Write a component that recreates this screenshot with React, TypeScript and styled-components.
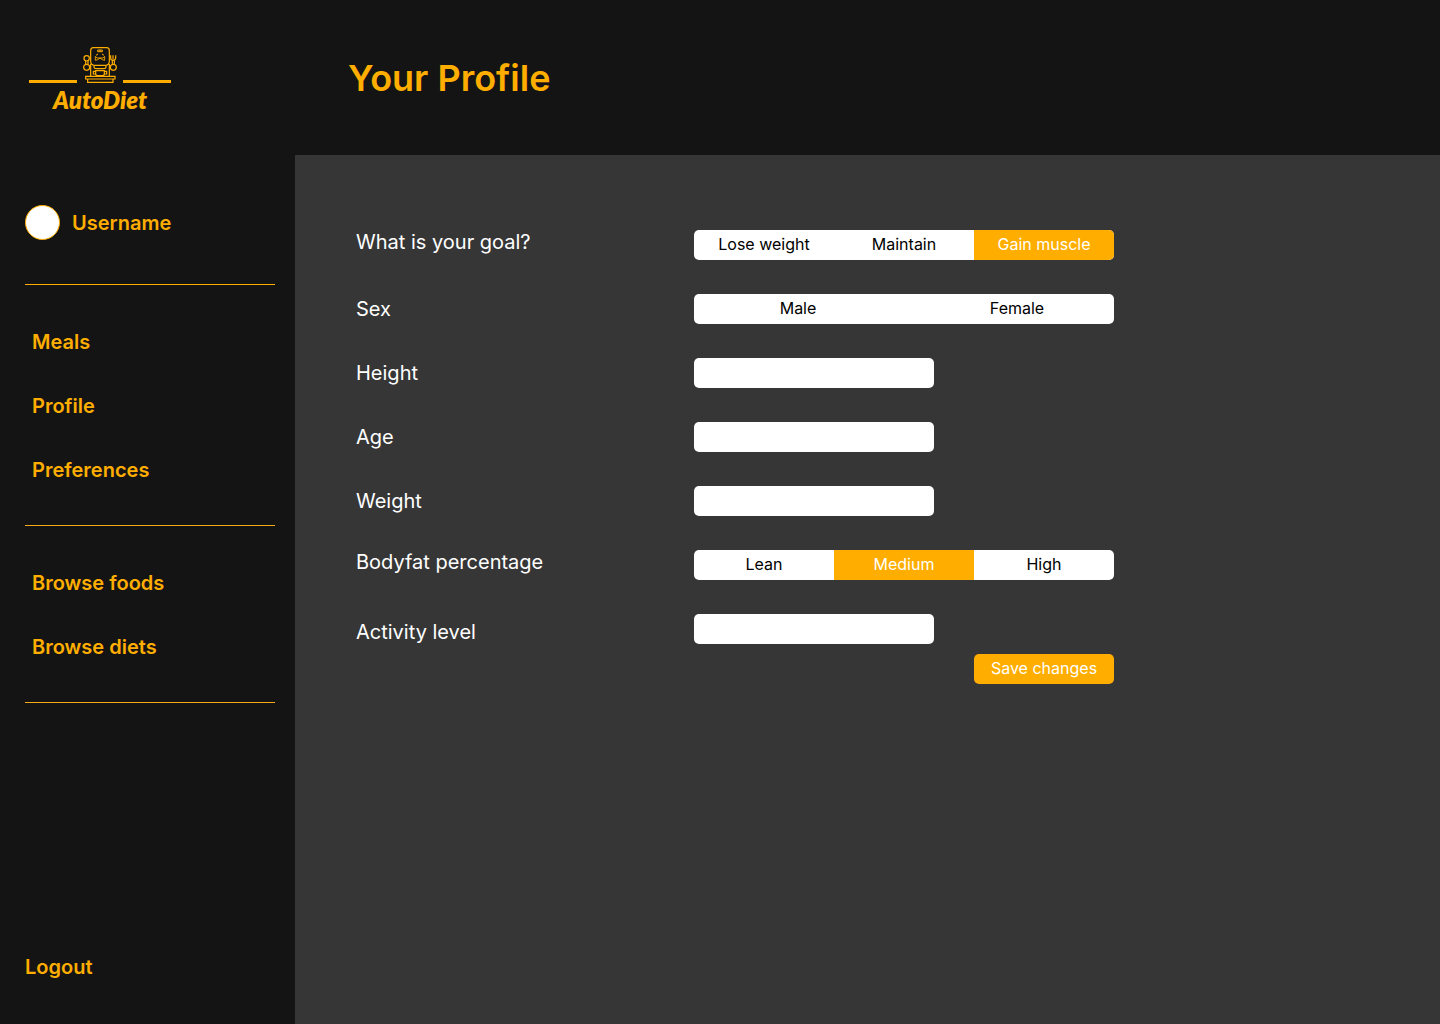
import React, { useState } from "react";
import styled, { createGlobalStyle } from "styled-components";

const colors = {
  accent: "#ffae00",
  dark: "#141414",
  panel: "#363636",
  rule: "#f3aa14",
};

const GlobalStyle = createGlobalStyle`
  *, *::before, *::after { box-sizing: border-box; }
  body {
    margin: 0;
    background: ${colors.dark};
    font-family: Inter, "Liberation Sans", sans-serif;
  }
`;

const Page = styled.div`
  display: grid;
  grid-template-columns: 295px 1fr;
  grid-template-rows: 155px 1fr;
  min-height: 100vh;
  background: ${colors.dark};
  color: ${colors.accent};
`;

const Brand = styled.a`
  justify-self: start;
  display: flex;
  flex-direction: column;
  align-items: center;
  width: 142px;
  margin: 47px 0 0 29px;
  color: inherit;
  text-decoration: none;
`;

const BrandMark = styled.span`
  display: flex;
  align-items: flex-end;
  gap: 6px;
`;

const BrandLine = styled.span`
  width: 48px;
  height: 3px;
  background: ${colors.accent};
`;

const BrandName = styled.span`
  font: italic 800 24px/34px Lato, sans-serif;
`;

const Header = styled.header`
  display: flex;
  align-items: center;
  padding: 0 53px;
`;

const Title = styled.h1`
  margin: 0;
  font-size: 36px;
  line-height: 44px;
  font-weight: 600;
`;

const Sidebar = styled.aside`
  display: flex;
  flex-direction: column;
  padding: 50px 20px 45px 25px;
`;

const User = styled.div`
  display: flex;
  align-items: center;
  gap: 12px;
  font-size: 20px;
  line-height: 24px;
  font-weight: 600;
  padding-bottom: 44px;
  border-bottom: 1px solid ${colors.accent};
`;

const Avatar = styled.span`
  width: 35px;
  height: 35px;
  border: 1px solid ${colors.accent};
  border-radius: 50%;
  background: #fff;
`;

const NavGroup = styled.nav`
  display: flex;
  flex-direction: column;
  align-items: flex-start;
  gap: 40px;
  padding: 45px 7px 43px;
  border-bottom: 1px solid ${colors.rule};
`;

const NavLink = styled.a`
  color: ${colors.accent};
  font-size: 20px;
  line-height: 24px;
  font-weight: 600;
  text-decoration: none;
`;

const Logout = styled.button`
  align-self: flex-start;
  margin-top: auto;
  padding: 0;
  border: 0;
  background: none;
  color: ${colors.accent};
  font: 600 20px/24px Inter, sans-serif;
  cursor: pointer;
`;

const Main = styled.main`
  padding: 75px 61px;
  background: ${colors.panel};
`;

const Form = styled.form`
  display: flex;
  flex-direction: column;
  gap: 34px;
  max-width: 758px;
  color: #fff;
`;

type Align = "start" | "center" | "end";

const Row = styled.div<{ $align: Align }>`
  display: grid;
  grid-template-columns: 338px 1fr;
  align-items: ${(p) => p.$align};
  height: 30px;
`;

const FieldLabel = styled.label`
  font-size: 20px;
  line-height: 24px;
`;

const TextInput = styled.input`
  width: 240px;
  height: 30px;
  padding: 0 12px;
  border: 0;
  border-radius: 5px;
  background: #fff;
  color: #000;
  font: 400 16px/20px Inter, sans-serif;
`;

const Segments = styled.div<{ $columns: string }>`
  display: grid;
  grid-template-columns: ${(p) => p.$columns};
  justify-content: space-between;
  height: 30px;
  border-radius: 5px;
  overflow: hidden;
  background: #fff;
`;

const Segment = styled.label`
  position: relative;
  display: flex;
  justify-content: center;
  padding: 4px 0 6px;
  color: #000;
  font-size: 16px;
  line-height: 20px;
  cursor: pointer;

  &:has(input:checked) {
    background: ${colors.accent};
    color: #fff;
  }
`;

const SegmentRadio = styled.input`
  position: absolute;
  inset: 0;
  width: 100%;
  height: 100%;
  margin: 0;
  opacity: 0;
  cursor: pointer;
`;

const SaveButton = styled.button`
  align-self: flex-end;
  width: 140px;
  height: 30px;
  margin-top: -24px;
  padding: 0 0 2px;
  border: 0;
  border-radius: 5px;
  background: ${colors.accent};
  color: #fff;
  font: 400 16px/20px Inter, sans-serif;
  cursor: pointer;
`;

function RobotChef() {
  return (
    <svg width="34" height="36" viewBox="15 15 102 108" fill="none" stroke={colors.accent} strokeWidth="3.6" aria-hidden="true">
      <path d="M46 17h40q8 0 8 9v32q0 12-12 12H50q-12 0-12-12V26q0-9 8-9z" />
      <path d="M59 24h14v5H59zM66 24v5" strokeWidth="3" />
      <path d="M54 40l6-4M78 40l-6-4" strokeWidth="3" />
      <path d="M52 43v12l7-2 7-5 7 5 7 2V43l-5 5H57z" strokeWidth="2.6" />
      <circle cx="26" cy="49" r="8" />
      <path d="M23 57v10M30 57v10" />
      <circle cx="26" cy="76" r="9" />
      <path d="M98 40v9q0 6 7 6t8-6v-9M105 40v12M103 56v10M109 56v10" />
      <circle cx="106" cy="76" r="9" />
      <path d="M48 70v6q0 4 6 4h24q6 0 6-4v-6M38 66v36M94 66v36" />
      <path d="M53 86h26v9q0 6-6 6H59q-6 0-6-6zM53 88h-7v8h7M79 88h7v8h-7" />
      <path d="M23 103h88v8H23zM29 111v10h76v-10" />
    </svg>
  );
}

interface ChoiceProps {
  label: string;
  name: string;
  options: string[];
  initial?: string;
  align?: Align;
  columns?: string;
}

function Choice({ label, name, options, initial = "", align = "center", columns = "repeat(3, 1fr)" }: ChoiceProps) {
  const [value, setValue] = useState(initial);
  return (
    <Row $align={align} role="radiogroup" aria-labelledby={`${name}-label`}>
      <FieldLabel as="span" id={`${name}-label`}>{label}</FieldLabel>
      <Segments $columns={columns}>
        {options.map((option) => (
          <Segment key={option}>
            <SegmentRadio
              type="radio"
              name={name}
              value={option}
              checked={value === option}
              onChange={() => setValue(option)}
            />
            {option}
          </Segment>
        ))}
      </Segments>
    </Row>
  );
}

function Field({ label, name, align = "center" }: { label: string; name: string; align?: Align }) {
  return (
    <Row $align={align}>
      <FieldLabel htmlFor={name}>{label}</FieldLabel>
      <TextInput id={name} name={name} type="text" />
    </Row>
  );
}

export default function App() {
  return (
    <>
      <GlobalStyle />
      <Page>
        <Brand href="#home">
          <BrandMark>
            <BrandLine />
            <RobotChef />
            <BrandLine />
          </BrandMark>
          <BrandName>AutoDiet</BrandName>
        </Brand>
        <Header>
          <Title>Your Profile</Title>
        </Header>
        <Sidebar>
          <User>
            <Avatar />
            Username
          </User>
          <NavGroup aria-label="Account">
            <NavLink href="#meals">Meals</NavLink>
            <NavLink href="#profile">Profile</NavLink>
            <NavLink href="#preferences">Preferences</NavLink>
          </NavGroup>
          <NavGroup aria-label="Browse">
            <NavLink href="#foods">Browse foods</NavLink>
            <NavLink href="#diets">Browse diets</NavLink>
          </NavGroup>
          <Logout type="button">Logout</Logout>
        </Sidebar>
        <Main>
          <Form onSubmit={(event) => event.preventDefault()}>
            <Choice label="What is your goal?" name="goal" align="start" options={["Lose weight", "Maintain", "Gain muscle"]} initial="Gain muscle" />
            <Choice label="Sex" name="sex" columns="208px 194px" options={["Male", "Female"]} />
            <Field label="Height" name="height" />
            <Field label="Age" name="age" />
            <Field label="Weight" name="weight" />
            <Choice label="Bodyfat percentage" name="bodyfat" align="start" options={["Lean", "Medium", "High"]} initial="Medium" />
            <Field label="Activity level" name="activity" align="end" />
            <SaveButton type="submit">Save changes</SaveButton>
          </Form>
        </Main>
      </Page>
    </>
  );
}
